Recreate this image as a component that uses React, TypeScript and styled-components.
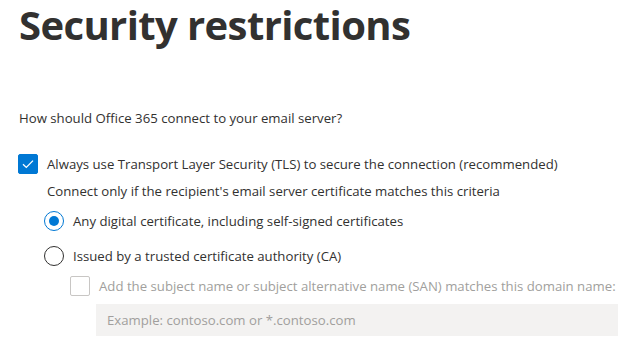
import React from "react";
import styled, { createGlobalStyle } from "styled-components";

const Global = createGlobalStyle`
  html, body { margin: 0; padding: 0; background: #fff; }
  body { font-family: "Open Sans", "Noto Sans", sans-serif; color: #323130; }
`;

const Page = styled.div`
  padding: 0 0 0 18px;
  display: flex;
  flex-direction: column;
`;

const Title = styled.h1`
  margin: 0;
  font-size: 40px;
  font-weight: 700;
  line-height: 50px;
  height: 50px;
  letter-spacing: -0.6px;
  padding-left: 1px;
  color: #323130;
`;

const Question = styled.div`
  margin-top: 59px;
  font-size: 13.2px;
  line-height: 18px;
  padding-left: 1px;
`;

const Row = styled.label<{ $indent: number; $disabled?: boolean }>`
  display: flex;
  align-items: center;
  gap: 9px;
  padding-left: ${(p) => p.$indent}px;
  font-size: 13.2px;
  line-height: 20px;
  color: ${(p) => (p.$disabled ? "#a19f9d" : "#323130")};
`;

const Box = styled.span<{ $checked?: boolean; $disabled?: boolean }>`
  width: 20px;
  height: 20px;
  box-sizing: border-box;
  border-radius: 2px;
  flex: none;
  display: flex;
  align-items: center;
  justify-content: center;
  background: ${(p) => (p.$checked ? "#0078d4" : "#fff")};
  border: 1px solid
    ${(p) => (p.$checked ? "#0078d4" : p.$disabled ? "#c8c6c4" : "#323130")};
`;

const Radio = styled.span<{ $checked?: boolean }>`
  width: 20px;
  height: 20px;
  box-sizing: border-box;
  border-radius: 50%;
  flex: none;
  display: flex;
  align-items: center;
  justify-content: center;
  border: 1px solid ${(p) => (p.$checked ? "#0078d4" : "#323130")};
  &::after {
    content: "";
    display: ${(p) => (p.$checked ? "block" : "none")};
    width: 10px;
    height: 10px;
    border-radius: 50%;
    background: #0078d4;
  }
`;

const Sub = styled.div`
  padding-left: 29px;
  font-size: 13.2px;
  line-height: 18px;
`;

const Input = styled.div`
  margin-left: 78px;
  width: 522px;
  height: 32px;
  box-sizing: border-box;
  background: #f3f2f1;
  padding: 0 11px;
  display: flex;
  align-items: center;
  font-size: 13.2px;
  color: #a19f9d;
`;

const Check = () => (
  <svg width="12" height="10" viewBox="0 0 12 10" fill="none">
    <path d="M1 5.2 L4.3 8.4 L11 1.6" stroke="#fff" strokeWidth="1.3" />
  </svg>
);

export default function App() {
  return (
    <>
      <Global />
      <Page>
        <Title>Security restrictions</Title>
        <Question>How should Office 365 connect to your email server?</Question>
        <Row $indent={0} style={{ marginTop: 27 }}>
          <Box $checked>
            <Check />
          </Box>
          Always use Transport Layer Security (TLS) to secure the connection (recommended)
        </Row>
        <Sub style={{ marginTop: 8 }}>
          Connect only if the recipient's email server certificate matches this criteria
        </Sub>
        <Row $indent={26} style={{ marginTop: 11 }}>
          <Radio $checked />
          Any digital certificate, including self-signed certificates
        </Row>
        <Row $indent={26} style={{ marginTop: 15 }}>
          <Radio />
          Issued by a trusted certificate authority (CA)
        </Row>
        <Row $indent={52} $disabled style={{ marginTop: 10 }}>
          <Box $disabled />
          Add the subject name or subject alternative name (SAN) matches this domain name:
        </Row>
        <Input style={{ marginTop: 8 }}>Example: contoso.com or *.contoso.com</Input>
      </Page>
    </>
  );
}
